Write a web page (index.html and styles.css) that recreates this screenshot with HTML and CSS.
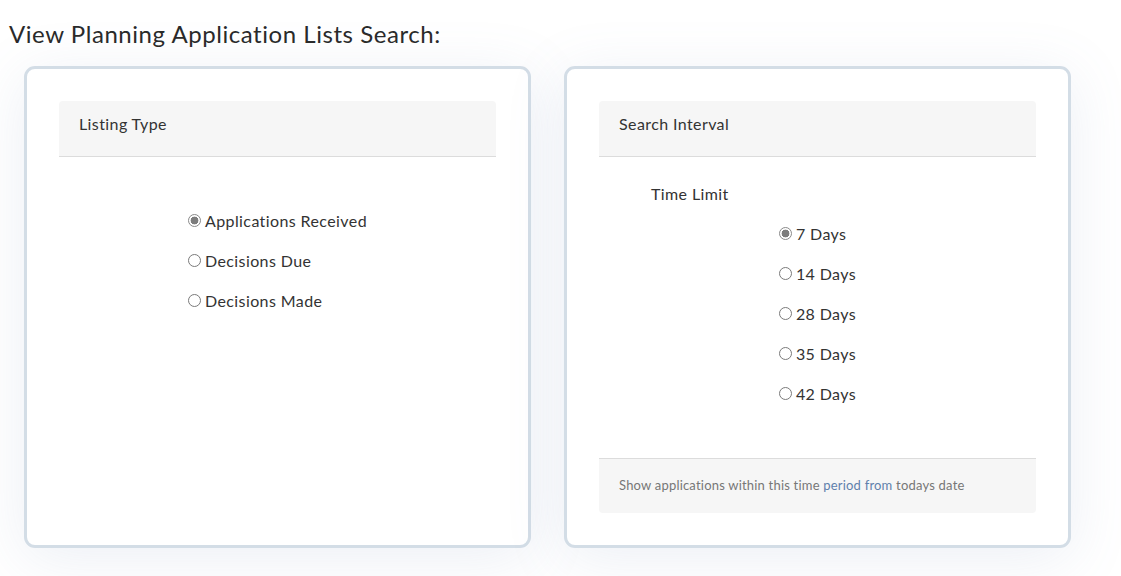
FILE: index.html
```html
<!DOCTYPE html>
<html>
<head>
<meta charset="utf-8">
<link rel="stylesheet" href="styles.css">
</head>
<body>
<h1 class="page-title">View Planning Application Lists Search:</h1>
<div class="cards">
  <section class="card">
    <div class="panel-head">Listing Type</div>
    <div class="listing-body">
      <div class="radio-group">
        <label class="radio-row"><input type="radio" name="type" checked><span>Applications Received</span></label>
        <label class="radio-row"><input type="radio" name="type"><span>Decisions Due</span></label>
        <label class="radio-row"><input type="radio" name="type"><span>Decisions Made</span></label>
      </div>
    </div>
  </section>
  <section class="card">
    <div class="panel-head">Search Interval</div>
    <div class="interval-body">
      <div class="field-label">Time Limit</div>
      <div class="radio-group">
        <label class="radio-row"><input type="radio" name="days" checked><span>7 Days</span></label>
        <label class="radio-row"><input type="radio" name="days"><span>14 Days</span></label>
        <label class="radio-row"><input type="radio" name="days"><span>28 Days</span></label>
        <label class="radio-row"><input type="radio" name="days"><span>35 Days</span></label>
        <label class="radio-row"><input type="radio" name="days"><span>42 Days</span></label>
      </div>
    </div>
    <div class="panel-foot">Show applications within this time <span class="hl">period from</span> todays date</div>
  </section>
</div>
</body>
</html>
```

FILE: styles.css
```css
* { box-sizing: border-box; }
html, body { margin: 0; padding: 0; background: #fff; }
body {
  font-family: "Lato", "Open Sans", sans-serif;
  color: #333;
  width: 1121px;
  height: 576px;
  overflow: hidden;
}
.page-title {
  margin: 0;
  padding: 18px 0 0 9px;
  font-size: 24px;
  font-weight: 400;
  line-height: 32px;
  color: #2a2a2a;
  letter-spacing: 0.55px;
}
.cards {
  display: grid;
  grid-template-columns: 507px 507px;
  column-gap: 33px;
  padding: 16px 0 0 24px;
}
.card {
  height: 482px;
  border: 3px solid #d3dde6;
  border-radius: 11px;
  background: #fff;
  padding: 32px;
  display: flex;
  flex-direction: column;
  box-shadow: 0 10px 60px rgba(110, 135, 175, 0.13);
}
.panel-head {
  background: #f6f6f6;
  border-bottom: 1px solid #dcdcdc;
  border-radius: 4px 4px 0 0;
  padding: 11px 20px 20px;
  font-size: 16px;
  line-height: 24px;
  color: #333;
  letter-spacing: 0.4px;
}
.listing-body {
  display: flex;
  justify-content: center;
  padding-top: 43px;
}
.radio-group {
  display: flex;
  flex-direction: column;
}
.radio-row {
  display: flex;
  align-items: center;
  height: 40px;
  font-size: 16px;
  color: #333;
  letter-spacing: 0.4px;
}
.radio-row input {
  appearance: none;
  -webkit-appearance: none;
  width: 13px;
  height: 13px;
  margin: 0 4px 0 0;
  border: 1px solid #7a7a7a;
  border-radius: 50%;
  background: #fff;
}
.radio-row input:checked {
  background: radial-gradient(circle, #7d7d7d 0 3.6px, #fff 4.2px);
  border-color: #8a8a8a;
}
.interval-body {
  flex: 1;
  display: flex;
  flex-direction: column;
  align-items: center;
  padding-top: 25px;
}
.field-label {
  align-self: flex-start;
  margin-left: 52px;
  font-size: 16px;
  line-height: 24px;
  margin-bottom: 7px;
  letter-spacing: 0.4px;
}
.panel-foot {
  background: #f6f6f6;
  border-top: 1px solid #dcdcdc;
  border-radius: 0 0 4px 4px;
  padding: 17px 20px 18px;
  font-size: 13px;
  line-height: 19px;
  color: #777;
  letter-spacing: 0.2px;
}
.panel-foot .hl { color: #5f80ac; }
```
